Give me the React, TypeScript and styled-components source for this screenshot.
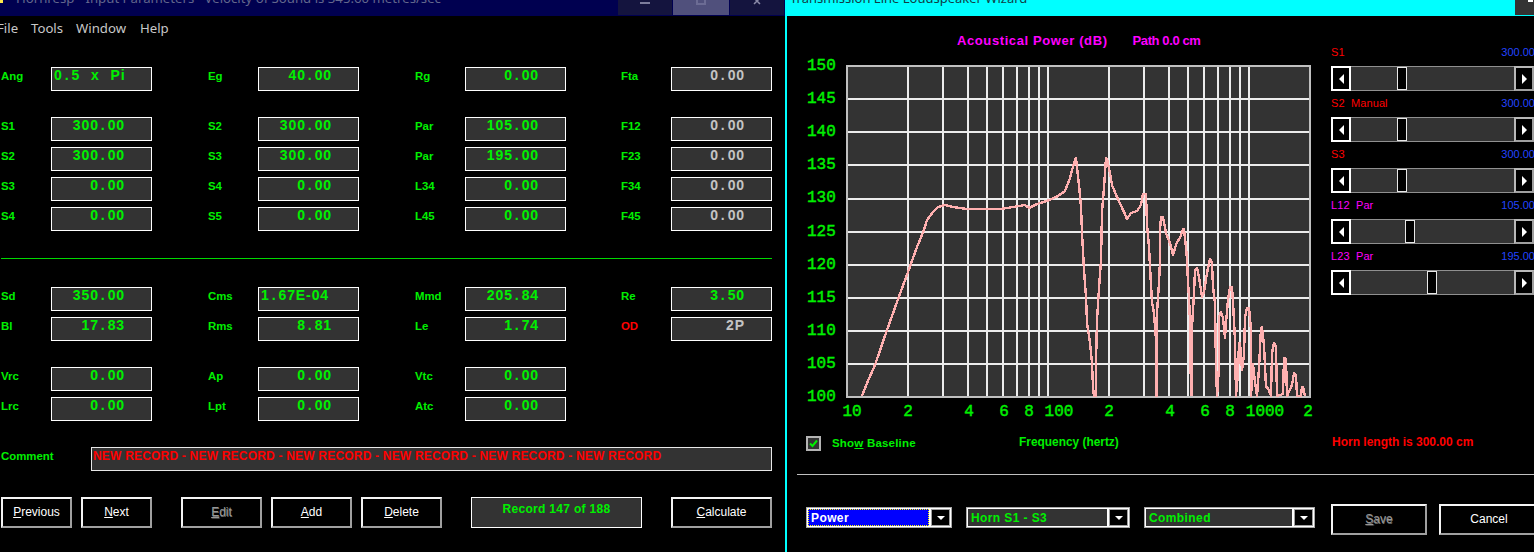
import styled, { createGlobalStyle } from 'styled-components';

const GREEN = '#00f000';
const GREY = '#c4c4c4';
const PANEL = '#333333';
const MAGENTA = '#ff00ff';
const RED = '#ff0000';
const BLUE = '#2244ff';

const GlobalStyle = createGlobalStyle`
  html, body { margin: 0; padding: 0; background: #000; }
  * { box-sizing: border-box; }
  body { font-family: "Liberation Sans", Arial, sans-serif; overflow: hidden; }
`;

const Screen = styled.div`
  width: 1534px;
  height: 552px;
  display: flex;
  overflow: hidden;
  background: #000;
`;

const LeftWindow = styled.div`
  width: 785px;
  flex: none;
`;

const RightWindow = styled.div`
  width: 749px;
  flex: none;
  border-left: 2px solid #00ffff;
  overflow: hidden;
`;

const LeftTitleBar = styled.div`
  height: 16px;
  background: #000050;
  display: flex;
  overflow: hidden;
`;

const AppIcon = styled.span`
  width: 3px;
  height: 3px;
  flex: none;
  background: #ffe94a;
  margin-right: 13px;
`;

const LeftTitleText = styled.span`
  font-family: "Noto Sans", sans-serif;
  font-size: 13.2px;
  line-height: 18px;
  margin-top: -11px;
  color: #63678c;
  white-space: pre;
  flex: 1;
`;

const WindowButton = styled.div<{ $active?: boolean }>`
  width: ${(p) => (p.$active ? 56 : 54)}px;
  margin-right: 1px;
  height: 15px;
  background: ${(p) => (p.$active ? '#50507c' : '#14143e')};
  display: flex;
  justify-content: center;
  flex: none;
`;

const MinGlyph = styled.span`
  width: 10px;
  height: 2px;
  margin-top: 2px;
  background: #7c7c9c;
`;

const MaxGlyph = styled.span`
  width: 10px;
  height: 5px;
  border: 2px solid #6c6c94;
  border-top: none;
`;

const MenuBar = styled.div`
  height: 24px;
  display: flex;
  align-items: center;
  font-family: "Noto Sans", sans-serif;
  font-size: 13.2px;
  color: #c8c8c8;
  margin-left: -3px;
`;

const MenuItem = styled.span<{ $w: number }>`
  width: ${(p) => p.$w}px;
`;

const Form = styled.div`
  padding: 27px 0 0 1px;
`;

const FieldRow = styled.div<{ $top: number }>`
  display: grid;
  grid-template-columns: 207px 207px 206px 151px;
  margin-top: ${(p) => p.$top}px;
`;

const Cell = styled.div`
  display: flex;
`;

const Label = styled.div<{ $red?: boolean; $w?: number }>`
  width: ${(p) => p.$w ?? 50}px;
  flex: none;
  font-size: 11.4px;
  font-weight: 700;
  line-height: 18px;
  color: ${(p) => (p.$red ? RED : GREEN)};
`;

const Field = styled.div<{ $grey?: boolean; $left?: boolean }>`
  width: 101px;
  height: 24px;
  border: 1px solid #fff;
  background: ${PANEL};
  color: ${(p) => (p.$grey ? GREY : GREEN)};
  font-size: 14px;
  font-weight: 700;
  letter-spacing: 0.9px;
  word-spacing: 6px;
  line-height: 14px;
  white-space: pre;
  text-align: ${(p) => (p.$left ? 'left' : 'right')};
  padding: 0 ${(p) => (p.$left ? 0 : 26)}px 0 ${(p) => (p.$left ? 2 : 0)}px;
`;

const Dot = styled.span`
  margin: 0 2px;
`;

const Divider = styled.div`
  height: 1px;
  width: 771px;
  background: #00d800;
  margin-top: 27px;
`;

const CommentRow = styled.div`
  display: flex;
  margin-top: 26px;
`;

const CommentBox = styled.div`
  width: 681px;
  height: 24px;
  border: 1px solid #e8e8e8;
  background: ${PANEL};
  color: ${RED};
  font-size: 12px;
  font-weight: 700;
  letter-spacing: 0.2px;
  line-height: 17px;
  padding-left: 1px;
  white-space: pre;
`;

const ActionRow = styled.div`
  display: flex;
  margin-top: 26px;
`;

const Button = styled.div<{ $w: number; $h?: number; $gap?: number; $disabled?: boolean }>`
  width: ${(p) => p.$w}px;
  height: ${(p) => p.$h ?? 31}px;
  margin-left: ${(p) => p.$gap ?? 0}px;
  flex: none;
  border: 2px solid;
  border-color: #f4f4f4 #a0a0a0 #a0a0a0 #f4f4f4;
  background: #000;
  color: ${(p) => (p.$disabled ? '#969696' : '#fff')};
  text-shadow: ${(p) => (p.$disabled ? '0.6px 0.6px 0 #6a6a6a' : 'none')};
  font-size: 12px;
  display: flex;
  align-items: center;
  justify-content: center;
  padding-bottom: 1px;
  u { text-underline-offset: 1px; }
`;

const RecordBox = styled.div`
  width: 171px;
  height: 31px;
  margin-left: 29px;
  border: 1px solid #fff;
  background: ${PANEL};
  color: ${GREEN};
  font-size: 12px;
  font-weight: 700;
  letter-spacing: 0.3px;
  text-align: center;
  line-height: 22px;
`;

const RightTitleBar = styled.div`
  height: 16px;
  background: #00ffff;
  display: flex;
  justify-content: space-between;
  overflow: hidden;
`;

const RightTitleText = styled.span`
  font-family: "Noto Sans", sans-serif;
  font-size: 13px;
  line-height: 18px;
  margin: -11px 0 0 3px;
  color: #103c44;
`;

const CornerButton = styled.div`
  width: 19px;
  height: 15px;
  background: ${PANEL};
  display: flex;
  justify-content: flex-end;
`;

const CornerTip = styled.span`
  width: 5px;
  height: 2px;
  margin-right: 1px;
  background: #fff;
`;

const TopSection = styled.div`
  display: flex;
  height: 416px;
`;

const ChartArea = styled.div`
  width: 544px;
  flex: none;
`;

const ChartTitle = styled.div`
  padding: 17px 0 0 170px;
  height: 33px;
  font-size: 13px;
  font-weight: 700;
  line-height: 16px;
  letter-spacing: 0.6px;
  color: ${MAGENTA};
  white-space: pre;
`;

const TitlePath = styled.span`
  margin-left: 25px;
  letter-spacing: -0.4px;
`;

const ChartSvg = styled.svg`
  display: block;
  margin: 6px 0 0 13px;
`;

const AxisText = styled.text`
  font-family: "Liberation Mono", monospace;
  font-size: 16px;
  font-weight: 400;
  fill: ${GREEN};
  stroke: ${GREEN};
  stroke-width: 0.45px;
`;

const SliderColumn = styled.div`
  width: 203px;
  flex: none;
  padding-top: 24px;
`;

const SliderHead = styled.div`
  height: 26px;
  display: flex;
  justify-content: space-between;
  align-items: center;
  font-size: 11px;
  white-space: pre;
  padding-bottom: 2px;
`;

const SliderName = styled.span<{ $color: string }>`
  color: ${(p) => p.$color};
  letter-spacing: 0.1px;
`;

const SliderValue = styled.span`
  color: ${BLUE};
  margin-right: -1px;
`;

const SliderBar = styled.div`
  height: 25px;
  display: flex;
  background: ${PANEL};
  border-top: 1px solid #909090;
  border-bottom: 1px solid #909090;
`;

const SliderTrack = styled.div`
  flex: 1;
`;

const SliderThumb = styled.div<{ $offset: number }>`
  width: 10px;
  height: 100%;
  margin-left: ${(p) => p.$offset}px;
  border: 1px solid #e8e8e8;
  background: #000;
`;

const SliderEnd = styled.div<{ $right?: boolean }>`
  width: 20px;
  flex: none;
  margin: -1px 0;
  background: #000;
  border: 2px solid;
  border-color: ${(p) => (p.$right ? '#b8b8b8 #a0a0a0 #a0a0a0 #b8b8b8' : '#fff')};
  display: flex;
  align-items: center;
  justify-content: center;
`;

const ArrowGlyph = styled.span<{ $right?: boolean }>`
  width: 0;
  height: 0;
  border-top: 5px solid transparent;
  border-bottom: 5px solid transparent;
  ${(p) => (p.$right ? 'border-left: 5px solid #fff;' : 'border-right: 5px solid #fff;')}
`;

const StatusRow = styled.div`
  height: 20px;
  margin-top: 1px;
  padding-left: 19px;
  display: flex;
  align-items: center;
  font-size: 12px;
  font-weight: 700;
  color: ${GREEN};
  white-space: pre;
`;

const CheckBox = styled.div`
  width: 15px;
  height: 15px;
  border: 2px solid #b4b4b4;
  background: ${PANEL};
  margin-right: 11px;
  display: flex;
  align-items: center;
  justify-content: center;
`;

const ShowBaseline = styled.span`
  width: 187px;
  font-size: 11.5px;
  letter-spacing: 0.2px;
  padding-bottom: 1px;
`;

const FrequencyLabel = styled.span`
  width: 313px;
  padding-bottom: 2px;
  font-size: 11.9px;
`;

const HornLength = styled.span`
  color: ${RED};
  padding-bottom: 2px;
`;

const Rule = styled.div`
  height: 1px;
  margin: 21px 0 0 10px;
  background: #c0c0c0;
`;

const ControlRow = styled.div`
  display: flex;
  padding: 29px 0 0 19px;
`;

const Combo = styled.div<{ $w: number; $gap?: number }>`
  width: ${(p) => p.$w}px;
  height: 21px;
  margin: 3px 0 0 ${(p) => p.$gap ?? 0}px;
  flex: none;
  display: flex;
  border: 1px solid #a8a8a8;
  padding: 1px;
  background: #fff;
`;

const ComboText = styled.div<{ $focus?: boolean }>`
  flex: 1;
  background: ${(p) => (p.$focus ? '#0000ff' : PANEL)};
  color: ${(p) => (p.$focus ? '#fff' : GREEN)};
  outline: ${(p) => (p.$focus ? '1px dotted #ffff00' : 'none')};
  outline-offset: -1px;
  font-size: 12px;
  font-weight: 700;
  letter-spacing: 0.4px;
  line-height: 19px;
  padding-left: 3px;
`;

const ComboButton = styled.div`
  width: 19px;
  margin-left: 2px;
  flex: none;
  background: #000;
  border: 1px solid #a0a0a0;
  display: flex;
  align-items: center;
  justify-content: center;
`;

const ComboArrow = styled.span`
  width: 0;
  height: 0;
  border-left: 4px solid transparent;
  border-right: 4px solid transparent;
  border-top: 4px solid #fff;
`;

type Param = { label: string; value?: string; grey?: boolean; left?: boolean; red?: boolean };

const rowsTop: Param[][] = [
  [
    { label: 'S1', value: '300.00' },
    { label: 'S2', value: '300.00' },
    { label: 'Par', value: '105.00' },
    { label: 'F12', value: '0.00', grey: true },
  ],
  [
    { label: 'S2', value: '300.00' },
    { label: 'S3', value: '300.00' },
    { label: 'Par', value: '195.00' },
    { label: 'F23', value: '0.00', grey: true },
  ],
  [
    { label: 'S3', value: '0.00' },
    { label: 'S4', value: '0.00' },
    { label: 'L34', value: '0.00' },
    { label: 'F34', value: '0.00', grey: true },
  ],
  [
    { label: 'S4', value: '0.00' },
    { label: 'S5', value: '0.00' },
    { label: 'L45', value: '0.00' },
    { label: 'F45', value: '0.00', grey: true },
  ],
];

const firstRow: Param[] = [
  { label: 'Ang', value: '0.5 x Pi', left: true },
  { label: 'Eg', value: '40.00' },
  { label: 'Rg', value: '0.00' },
  { label: 'Fta', value: '0.00', grey: true },
];

const driverRows: Param[][] = [
  [
    { label: 'Sd', value: '350.00' },
    { label: 'Cms', value: '1.67E-04', left: true },
    { label: 'Mmd', value: '205.84' },
    { label: 'Re', value: '3.50' },
  ],
  [
    { label: 'Bl', value: '17.83' },
    { label: 'Rms', value: '8.81' },
    { label: 'Le', value: '1.74' },
    { label: 'OD', value: '2P', grey: true, red: true },
  ],
];

const chamberRows: Param[][] = [
  [
    { label: 'Vrc', value: '0.00' },
    { label: 'Ap', value: '0.00' },
    { label: 'Vtc', value: '0.00' },
  ],
  [
    { label: 'Lrc', value: '0.00' },
    { label: 'Lpt', value: '0.00' },
    { label: 'Atc', value: '0.00' },
  ],
];

const sliders = [
  { name: 'S1', color: RED, value: '300.00', offset: 46 },
  { name: 'S2  Manual', color: RED, value: '300.00', offset: 46 },
  { name: 'S3', color: RED, value: '300.00', offset: 46 },
  { name: 'L12  Par', color: MAGENTA, value: '105.00', offset: 54 },
  { name: 'L23  Par', color: MAGENTA, value: '195.00', offset: 76 },
];

// traced off the reference, in page pixels
const curve = [
  [862, 396], [867, 383], [875, 365], [887, 330], [897, 302], [908, 272], [917, 247], [924, 230],
  [927, 220], [933, 212], [938, 207], [945, 205], [953, 207], [967, 209], [1000, 209], [1007, 208],
  [1025, 205], [1029, 208], [1037, 204], [1047, 201], [1058, 196], [1065, 191], [1070, 178], [1074, 163],
  [1076, 158], [1077, 167], [1079, 185], [1081, 207], [1082, 233], [1084, 270], [1086, 297], [1087, 323],
  [1090, 343], [1092, 363], [1093, 387], [1094, 396], [1096, 396], [1096, 362], [1097, 320], [1099, 288],
  [1101, 260], [1102, 212], [1104, 188], [1106, 158], [1107, 159], [1110, 173], [1112, 185], [1117, 197],
  [1124, 212], [1127, 219], [1131, 213], [1137, 211], [1141, 205], [1143, 194], [1146, 194], [1147, 225],
  [1149, 247], [1150, 267], [1152, 302], [1154, 313], [1156, 340], [1156, 396], [1157, 396], [1157, 313],
  [1159, 283], [1160, 260], [1160, 230], [1161, 217], [1163, 217], [1166, 233], [1170, 243], [1173, 255],
  [1175, 248], [1177, 242], [1180, 238], [1183, 229], [1184, 229], [1186, 247], [1187, 260], [1188, 283],
  [1189, 297], [1190, 323], [1191, 395], [1192, 395], [1192, 328], [1194, 293], [1195, 270], [1197, 268],
  [1199, 277], [1202, 297], [1204, 292], [1207, 273], [1210, 259], [1212, 263], [1213, 287], [1215, 303],
  [1216, 367], [1217, 396], [1219, 367], [1219, 317], [1221, 312], [1223, 318], [1225, 338], [1226, 323],
  [1228, 300], [1230, 287], [1232, 287], [1233, 302], [1235, 340], [1236, 396], [1238, 373], [1239, 343],
  [1240, 343], [1242, 370], [1244, 355], [1245, 317], [1247, 308], [1249, 308], [1251, 330], [1251, 396],
  [1253, 364], [1255, 382], [1257, 396], [1259, 368], [1261, 328], [1262, 327], [1264, 345], [1266, 387],
  [1268, 388], [1271, 396], [1272, 353], [1274, 343], [1276, 347], [1277, 396], [1283, 394], [1284, 358],
  [1286, 359], [1287, 396], [1292, 385], [1294, 373], [1296, 375], [1297, 396], [1301, 396], [1302, 387],
  [1303, 387], [1305, 396],
];

const gridY = [99, 132, 165, 199, 232, 265, 298, 331, 364];
const yLabels = [150, 145, 140, 135, 130, 125, 120, 115, 110, 105, 100];
const gridFreqs = [20, 30, 40, 50, 60, 70, 80, 90, 100, 200, 300, 400, 500, 600, 700, 800, 900, 1000];
const xLabels: [string, number][] = [
  ['10', 852], ['2', 908], ['4', 969], ['6', 1004], ['8', 1029], ['100', 1059],
  ['2', 1109], ['4', 1170], ['6', 1205], ['8', 1230], ['1000', 1265], ['2', 1308],
];

const freqX = (f: number) => Math.round(847 + 201 * Math.log10(f / 10));

function ResponseChart() {
  return (
    <ChartSvg width={520} height={370} viewBox="800 55 520 370">
      <rect x={847} y={66} width={464} height={331} fill={PANEL} />
      <g stroke="#ececec" strokeWidth={2} shapeRendering="crispEdges">
        {gridY.map((y) => (
          <line key={y} x1={847} x2={1310} y1={y} y2={y} />
        ))}
        {gridFreqs.map((f) => (
          <line key={f} x1={freqX(f)} x2={freqX(f)} y1={66} y2={397} />
        ))}
      </g>
      <rect x={847} y={66} width={463} height={331} fill="none" stroke="#c0c0c0" strokeWidth={2} shapeRendering="crispEdges" />
      <polyline
        points={curve.map((p) => p.join(',')).join(' ')}
        fill="none"
        stroke="#ffb0b0"
        strokeWidth={2.4}
        strokeLinejoin="round"
        shapeRendering="crispEdges"
      />
      {yLabels.map((n, i) => (
        <AxisText key={n} x={807} y={70 + i * 33.1}>
          {n}
        </AxisText>
      ))}
      {xLabels.map(([t, x], i) => (
        <AxisText key={i} x={x} y={416} textAnchor="middle">
          {t}
        </AxisText>
      ))}
    </ChartSvg>
  );
}

function Value({ text }: { text: string }) {
  const parts = text.split('.');
  return (
    <>
      {parts.map((part, i) => (
        <span key={i}>
          {i > 0 && <Dot>.</Dot>}
          {part}
        </span>
      ))}
    </>
  );
}

function ParamRow({ params, top }: { params: Param[]; top: number }) {
  return (
    <FieldRow $top={top}>
      {params.map((p, i) => (
        <Cell key={i}>
          <Label $red={p.red}>{p.label}</Label>
          <Field $grey={p.grey} $left={p.left}>
            <Value text={p.value ?? ''} />
          </Field>
        </Cell>
      ))}
    </FieldRow>
  );
}

export default function App() {
  return (
    <Screen>
      <GlobalStyle />
      <LeftWindow>
        <LeftTitleBar>
          <AppIcon />
          <LeftTitleText>Hornresp - Input Parameters   Velocity of Sound is 345.60 metres/sec</LeftTitleText>
          <WindowButton><MinGlyph /></WindowButton>
          <WindowButton $active><MaxGlyph /></WindowButton>
          <WindowButton>
            <svg width="10" height="5" viewBox="0 0 10 5">
              <path d="M0 -4L8 4M10 -4L2 4" stroke="#8a8aa8" strokeWidth="1.5" fill="none" />
            </svg>
          </WindowButton>
        </LeftTitleBar>
        <MenuBar>
          <MenuItem $w={34}>File</MenuItem>
          <MenuItem $w={45}>Tools</MenuItem>
          <MenuItem $w={64}>Window</MenuItem>
          <MenuItem $w={40}>Help</MenuItem>
        </MenuBar>
        <Form>
          <ParamRow params={firstRow} top={0} />
          {rowsTop.map((params, i) => (
            <ParamRow key={i} params={params} top={i === 0 ? 26 : 6} />
          ))}
          <Divider />
          {driverRows.map((params, i) => (
            <ParamRow key={i} params={params} top={i === 0 ? 28 : 6} />
          ))}
          {chamberRows.map((params, i) => (
            <ParamRow key={i} params={params} top={i === 0 ? 26 : 6} />
          ))}
          <CommentRow>
            <Label $w={90}>Comment</Label>
            <CommentBox>NEW RECORD - NEW RECORD - NEW RECORD - NEW RECORD - NEW RECORD - NEW RECORD</CommentBox>
          </CommentRow>
          <ActionRow>
            <Button $w={71}><span><u>P</u>revious</span></Button>
            <Button $w={71} $gap={9}><span><u>N</u>ext</span></Button>
            <Button $w={81} $gap={29} $disabled><span><u>E</u>dit</span></Button>
            <Button $w={81} $gap={9}><span><u>A</u>dd</span></Button>
            <Button $w={81} $gap={9}><span><u>D</u>elete</span></Button>
            <RecordBox>Record 147 of 188</RecordBox>
            <Button $w={101} $gap={29}><span><u>C</u>alculate</span></Button>
          </ActionRow>
        </Form>
      </LeftWindow>
      <RightWindow>
        <RightTitleBar>
          <RightTitleText>Transmission Line Loudspeaker Wizard</RightTitleText>
          <CornerButton><CornerTip /></CornerButton>
        </RightTitleBar>
        <TopSection>
          <ChartArea>
            <ChartTitle>Acoustical Power (dB)<TitlePath>Path 0.0 cm</TitlePath></ChartTitle>
            <ResponseChart />
          </ChartArea>
          <SliderColumn>
            {sliders.map((s) => (
              <div key={s.name}>
                <SliderHead>
                  <SliderName $color={s.color}>{s.name}</SliderName>
                  <SliderValue>{s.value}</SliderValue>
                </SliderHead>
                <SliderBar>
                  <SliderEnd><ArrowGlyph /></SliderEnd>
                  <SliderTrack><SliderThumb $offset={s.offset} /></SliderTrack>
                  <SliderEnd $right><ArrowGlyph $right /></SliderEnd>
                </SliderBar>
              </div>
            ))}
          </SliderColumn>
        </TopSection>
        <StatusRow>
          <CheckBox>
            <svg width="9" height="9" viewBox="0 0 9 9">
              <path d="M1 4.5L3.5 7L8 1.5" stroke={GREEN} strokeWidth="2" fill="none" />
            </svg>
          </CheckBox>
          <ShowBaseline>Sho<u>w</u> Baseline</ShowBaseline>
          <FrequencyLabel>Frequency (hertz)</FrequencyLabel>
          <HornLength>Horn length is 300.00 cm</HornLength>
        </StatusRow>
        <Rule />
        <ControlRow>
          <Combo $w={146}>
            <ComboText $focus>Power</ComboText>
            <ComboButton><ComboArrow /></ComboButton>
          </Combo>
          <Combo $w={164} $gap={14}>
            <ComboText>Horn S1 - S3</ComboText>
            <ComboButton><ComboArrow /></ComboButton>
          </Combo>
          <Combo $w={171} $gap={14}>
            <ComboText>Combined</ComboText>
            <ComboButton><ComboArrow /></ComboButton>
          </Combo>
          <Button $w={96} $gap={16} $disabled><span><u>S</u>ave</span></Button>
          <Button $w={100} $gap={12}><span>Cancel</span></Button>
        </ControlRow>
      </RightWindow>
    </Screen>
  );
}
